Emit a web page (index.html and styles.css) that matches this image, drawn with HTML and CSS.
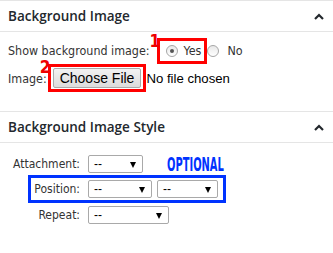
FILE: index.html
```html
<!DOCTYPE html>
<html>
<head>
<meta charset="utf-8">
<link rel="stylesheet" href="styles.css">
</head>
<body>
<div class="panel">
  <div class="hdr">
    <h3 class="hdr-title">Background Image</h3>
    <svg class="chev" width="10" height="7" viewBox="0 0 10 7"><path d="M1 6 L5 2 L9 6" fill="none" stroke="#23282d" stroke-width="2.2"/></svg>
  </div>
  <div class="sec1">
    <div class="row row-show">
      <span class="lbl">Show background image:</span>
      <span class="mark mark-red">
        <span class="num">1</span>
        <span class="radio checked"></span><span class="opt">Yes</span>
      </span>
      <span class="radio"></span><span class="opt opt-no">No</span>
    </div>
    <div class="row row-file">
      <span class="lbl">Image:</span>
      <span class="mark mark-red mark-btn">
        <span class="num num2">2</span>
        <button class="btn">Choose File</button>
      </span>
      <span class="nofile">No file chosen</span>
    </div>
  </div>
  <div class="hdr hdr2">
    <h3 class="hdr-title">Background Image Style</h3>
    <svg class="chev" width="10" height="7" viewBox="0 0 10 7"><path d="M1 6 L5 2 L9 6" fill="none" stroke="#23282d" stroke-width="2.2"/></svg>
  </div>
  <div class="sec2">
    <div class="frow">
      <span class="flbl">Attachment:</span>
      <span class="sel w55">--<i class="arr"></i></span>
      <span class="optional">OPTIONAL</span>
    </div>
    <div class="frow blue">
      <span class="flbl">Position:</span>
      <span class="sel w64">--<i class="arr"></i></span>
      <span class="sel w61">--<i class="arr"></i></span>
    </div>
    <div class="frow frow-last">
      <span class="flbl">Repeat:</span>
      <span class="sel w81">--<i class="arr"></i></span>
    </div>
  </div>
</div>
</body>
</html>
```
FILE: styles.css
```css
html, body { margin: 0; padding: 0; background: #fff; }
body { width: 333px; height: 253px; overflow: hidden; font-family: "DejaVu Sans Condensed", "DejaVu Sans", sans-serif; color: #333; }
.panel { border-top: 1px solid #e5e5e5; }
.hdr { display: flex; align-items: center; justify-content: space-between; height: 30px; padding: 0 8px 0 8px; border-bottom: 1px solid #e5e5e5; }
.hdr2 { border-top: 1px solid #e5e5e5; height: 30px; }
.hdr-title { margin: 0; font-family: "Open Sans", sans-serif; font-weight: 600; font-size: 13.5px; color: #23282d; }
.chev { margin-right: 1px; }
.sec1 { padding: 4px 8px 19px; }
.row { display: flex; align-items: center; font-size: 12.4px; }
.row-show { height: 27px; margin-top: 1px; }
.lbl { color: #333; }
.mark { position: relative; display: inline-flex; align-items: center; border: 3px solid #f00; box-sizing: border-box; }
.mark-red { height: 26px; padding: 0 3px 0 6px; margin-left: 7px; }
.num { position: absolute; left: -10px; top: -8px; color: #e00; font-family: "DejaVu Sans Condensed", "DejaVu Sans", sans-serif; font-weight: bold; font-size: 17px; line-height: 17px; }
.radio { width: 12px; height: 12px; border-radius: 50%; border: 1px solid #a6a6a6; background: linear-gradient(#e8e8e8, #fff); display: inline-block; box-sizing: border-box; position: relative; }
.radio.checked::after { content: ""; position: absolute; left: 3px; top: 3px; width: 4px; height: 4px; border-radius: 50%; background: #555; }
.opt { margin-left: 6px; font-size: 12.4px; color: #333; }
.opt-no { margin-left: 8px; }
.row-file { height: 28px; }
.mark-btn { height: 28px; padding: 0 2px; margin-left: 1px; }
.num2 { left: -11px; top: -8px; }
.btn { font-family: "Liberation Sans", Arial, sans-serif; font-size: 14px; color: #000; height: 20px; padding: 0 6px; border: 1px solid #aaa; border-radius: 2px; background: linear-gradient(#f2f2f2, #dcdcdc); }
.nofile { font-family: "Liberation Sans", Arial, sans-serif; font-size: 13.2px; color: #000; margin-left: 0; }
.sec2 { padding: 12px 0 0 0; }
.frow { display: flex; align-items: center; height: 18px; font-size: 12px; }
.flbl { width: 80px; text-align: right; margin-right: 8px; color: #333; }
.blue { border: 3px solid #0033ff; width: 198px; height: 28px; box-sizing: border-box; margin-left: 28px; margin-top: 2px; }
.blue .flbl { width: 49px; margin-right: 8px; }
.frow-last { margin-top: 3px; }
.sel { position: relative; display: inline-block; height: 18px; line-height: 16px; box-sizing: border-box; border: 1px solid #a9a9a9; border-radius: 2px; padding-left: 5px; font-family: "Liberation Sans", Arial, sans-serif; font-size: 12px; color: #000; margin-right: 5px; }
.arr { position: absolute; right: 6px; top: 6px; width: 0; height: 0; border-left: 3.5px solid transparent; border-right: 3.5px solid transparent; border-top: 6px solid #000; }
.w55 { width: 55px; }
.w64 { width: 64px; }
.w61 { width: 61px; }
.w81 { width: 81px; }
.optional { margin-left: 19px; font-family: "DejaVu Sans Condensed", "DejaVu Sans", sans-serif; font-weight: bold; font-size: 19px; line-height: 18px; color: #0033ff; transform: scaleX(0.58); transform-origin: left center; display: inline-block; }
```
